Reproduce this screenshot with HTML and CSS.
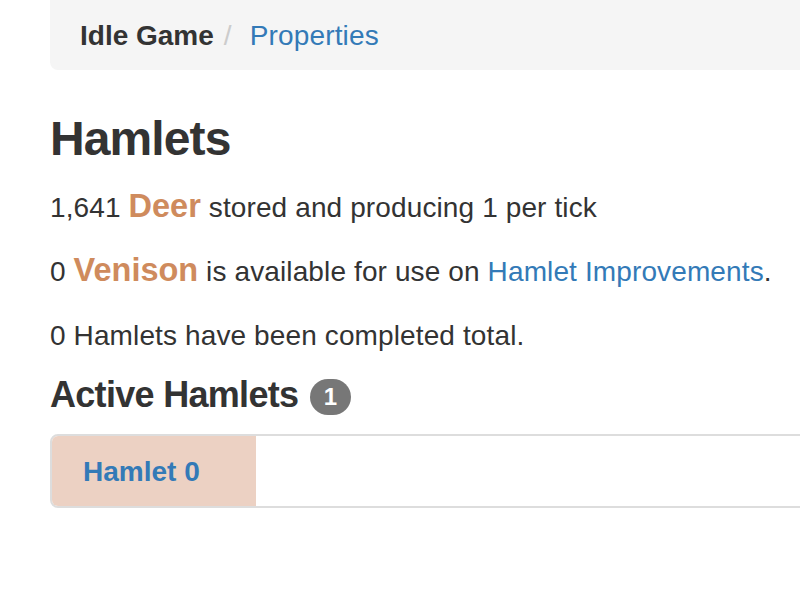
FILE: index.html
```html
<!DOCTYPE html>
<html lang="en">
<head>
<meta charset="utf-8">
<title>Hamlets - Idle Game</title>
<link rel="stylesheet" href="styles.css">
</head>
<body>
<div class="page">
  <ol class="breadcrumb">
    <li class="crumb crumb-active">Idle Game</li><li class="crumb"><a href="#" class="link">Properties</a></li>
  </ol>

  <h1 class="title">Hamlets</h1>

  <p class="line">1,641 <span class="resource">Deer</span> stored and producing 1 per tick</p>
  <p class="line">0 <span class="resource">Venison</span> is available for use on <a href="#" class="link">Hamlet Improvements</a>.</p>
  <p class="line">0 Hamlets have been completed total.</p>

  <h2 class="subtitle">Active Hamlets <span class="badge">1</span></h2>

  <div class="tabs">
    <a href="#" class="tab tab-active">Hamlet 0</a>
  </div>
</div>
</body>
</html>
```

FILE: styles.css
```css
html, body {
  margin: 0;
  padding: 0;
  overflow: hidden;
  background: #fff;
}

body {
  font-family: "Liberation Sans", Arial, Helvetica, sans-serif;
  font-size: 28px;
  line-height: 40px;
  color: #333;
}

.page {
  padding: 0 0 0 50px;
  margin-right: -40px;
}

.link {
  color: #337ab7;
  text-decoration: none;
}

.breadcrumb {
  list-style: none;
  margin: 0;
  padding: 16px 30px 14px;
  background: #f5f5f5;
  border-radius: 0 0 0 8px;
  letter-spacing: 0.15px;
}

.crumb {
  display: inline-block;
}

.crumb + .crumb::before {
  content: "/\00a0";
  padding: 0 10px;
  color: #ccc;
}

.crumb-active {
  font-weight: bold;
  color: #333;
  letter-spacing: 0;
}

.title {
  margin: 43px 0 22px;
  font-size: 48px;
  line-height: 1.1;
  font-weight: bold;
  letter-spacing: -0.9px;
}

.line {
  margin: 0;
  letter-spacing: 0.12px;
}

.line + .line {
  margin-top: 24px;
}

.resource {
  font-size: 32.5px;
  line-height: 1;
  font-weight: bold;
  letter-spacing: 0;
  color: #cf8b5d;
}

.subtitle {
  margin: 19px 0 19px;
  font-size: 36px;
  line-height: 1.1;
  font-weight: bold;
  letter-spacing: -0.7px;
}

.badge {
  display: inline-block;
  box-sizing: border-box;
  min-width: 20px;
  margin-left: 2px;
  padding: 6px 14px;
  font-size: 24px;
  line-height: 1;
  font-weight: bold;
  color: #fff;
  text-align: center;
  vertical-align: middle;
  background: #777;
  border-radius: 20px;
  letter-spacing: 0;
}

.tabs {
  display: flex;
  border: 2px solid #ddd;
  border-radius: 8px 0 0 8px;
}

.tab {
  box-sizing: border-box;
  width: 204px;
  padding: 16px 31px 14px;
  font-weight: bold;
  color: #337ab7;
  text-decoration: none;
}

.tab-active {
  background: #ecd1c3;
  border-radius: 6px 0 0 6px;
}
```
